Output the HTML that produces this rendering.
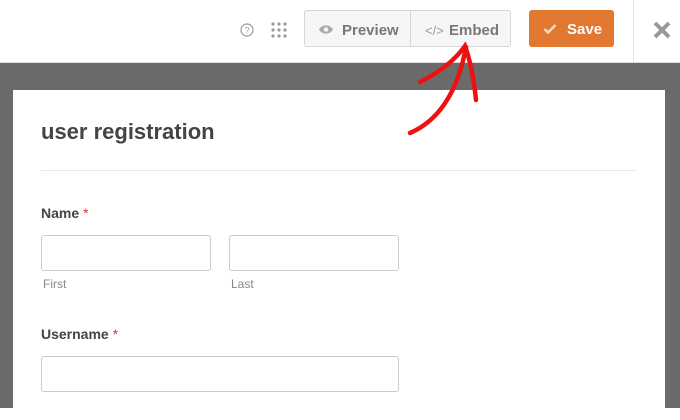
<!DOCTYPE html>
<html><head><style>
*{margin:0;padding:0;box-sizing:border-box}
body{width:680px;height:408px;overflow:hidden;background:#fff;font-family:"Liberation Sans",Arial,sans-serif;position:relative}
.top{position:absolute;left:0;top:0;width:680px;height:63px;background:#fff;border-bottom:1px solid #ddd}
.dark{position:absolute;left:0;top:63px;width:680px;height:345px;background:#6b6b6b}
.panel{position:absolute;left:13px;top:90px;width:652px;height:330px;background:#fff}
.grp{position:absolute;left:304px;top:10px;width:207px;height:37px;border:1px solid #d6d6d6;border-radius:3px;background:#f6f6f6}
.grp .div{position:absolute;left:105px;top:0;width:1px;height:35px;background:#d6d6d6}
.btxt{position:absolute;top:11px;font-size:15px;font-weight:bold;color:#777}
.save{position:absolute;left:529px;top:10px;width:85px;height:37px;background:#e27730;border-radius:3px;color:#fff;font-weight:bold;font-size:15px}
.vline{position:absolute;left:633px;top:0;width:1px;height:63px;background:#e2e2e2}
.lbl{position:absolute;font-size:14px;font-weight:bold;color:#444}
.lbl span{color:#d63638;font-weight:normal;margin-left:4px}
.in{position:absolute;border:1px solid #ccc;border-radius:3px;height:36px;background:#fff}
.sub{position:absolute;font-size:12px;color:#888}
</style></head><body>
<div class="top">
 <svg style="position:absolute;left:240px;top:23px" width="14" height="14" viewBox="0 0 14 14"><circle cx="7" cy="7" r="6" fill="none" stroke="#999" stroke-width="1.2"/><text x="7" y="10.5" font-size="9" text-anchor="middle" fill="#999" font-family="Liberation Sans">?</text></svg>
 <svg style="position:absolute;left:271px;top:22px" width="16" height="16"><g fill="#999"><circle cx="2" cy="2" r="1.6"/><circle cx="8" cy="2" r="1.6"/><circle cx="14" cy="2" r="1.6"/><circle cx="2" cy="8" r="1.6"/><circle cx="8" cy="8" r="1.6"/><circle cx="14" cy="8" r="1.6"/><circle cx="2" cy="14" r="1.6"/><circle cx="8" cy="14" r="1.6"/><circle cx="14" cy="14" r="1.6"/></g></svg>
 <div class="grp"><div class="div"></div>
  <svg style="position:absolute;left:13px;top:13px" width="16" height="11"><path d="M1 5.5C4 0 12 0 15 5.5C12 11 4 11 1 5.5Z" fill="#aaa"/><circle cx="8" cy="5.5" r="2.3" fill="#f6f6f6"/></svg>
  <div class="btxt" style="left:37px">Preview</div>
  <div class="btxt" style="left:120px;font-weight:normal;font-size:13px;top:12px;color:#999">&lt;/&gt;</div>
  <div class="btxt" style="left:144px">Embed</div>
 </div>
 <div class="save"><svg style="position:absolute;left:14px;top:13px" width="14" height="11"><path d="M1.5 6L5 9.5L12.5 2" fill="none" stroke="#f5d6bf" stroke-width="2.6"/></svg><span style="position:absolute;left:38px;top:11px">Save</span></div>
 <div class="vline"></div>
 <svg style="position:absolute;left:653px;top:21px" width="18" height="18"><path d="M2 2L16 16M16 2L2 16" stroke="#999" stroke-width="4"/></svg>
</div>
<div class="dark"></div>
<div class="panel"></div>
<div style="position:absolute;left:41px;top:119px;font-size:22px;font-weight:bold;color:#444">user registration</div>
<div style="position:absolute;left:41px;top:170px;width:596px;height:1px;background:#e8e8e8"></div>
<div class="lbl" style="left:41px;top:205px">Name<span>*</span></div>
<div class="in" style="left:41px;top:235px;width:170px"></div>
<div class="in" style="left:229px;top:235px;width:170px"></div>
<div class="sub" style="left:43px;top:277px">First</div>
<div class="sub" style="left:231px;top:277px">Last</div>
<div class="lbl" style="left:41px;top:326px">Username<span>*</span></div>
<div class="in" style="left:41px;top:356px;width:358px"></div>
<svg style="position:absolute;left:0;top:0" width="680" height="408"><g fill="none" stroke="#ee1111" stroke-width="4.5" stroke-linecap="round"><path d="M410 133C440 120 458 90 466 47"/><path d="M420 82C440 72 455 60 465 46C470 60 474 80 476 100"/></g></svg>
</body></html>
